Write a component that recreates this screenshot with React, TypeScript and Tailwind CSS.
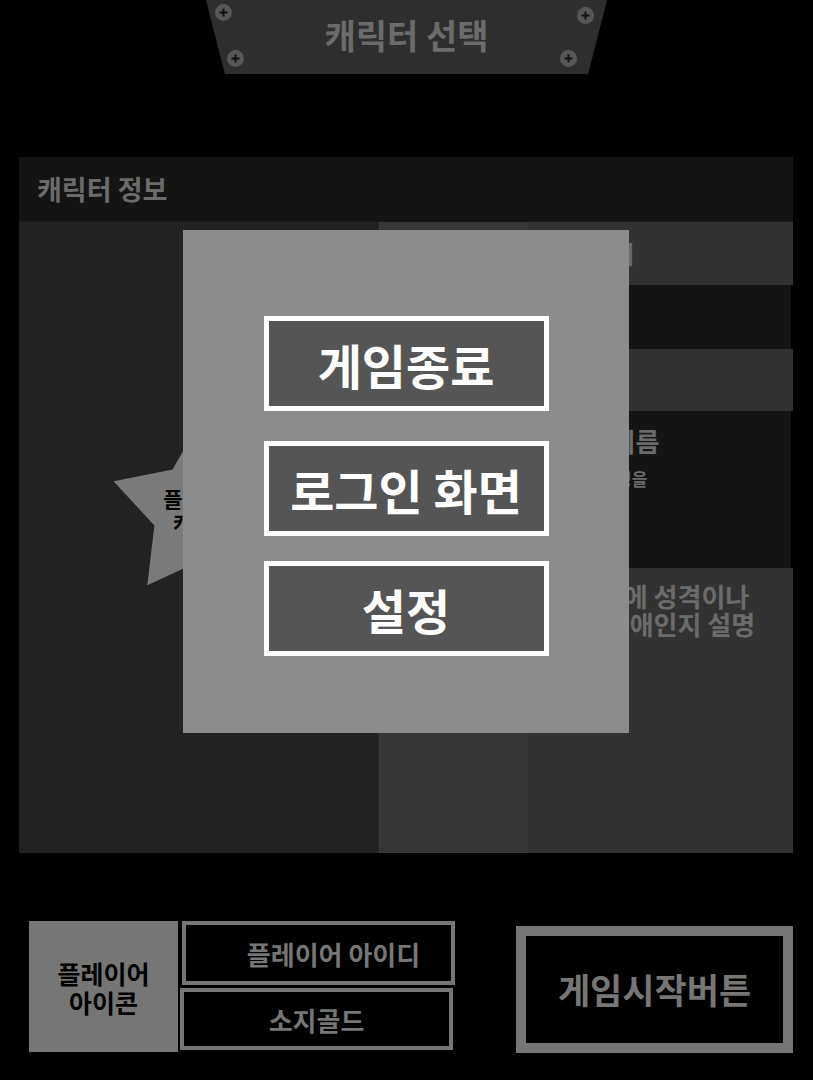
const font = "font-['Noto_Sans_CJK_KR','Noto_Sans',sans-serif]"

const Screw = ({ className }: { className: string }) => (
  <svg className={`absolute ${className}`} width="17" height="17" viewBox="0 0 17 17">
    <circle cx="8.5" cy="8.5" r="8.5" fill="#575757" />
    <rect x="4.5" y="7.5" width="8" height="2" fill="#111" />
    <rect x="7.5" y="4.5" width="2" height="8" fill="#111" />
  </svg>
)

const Star = () => {
  // 5-point star, center (93,93), outer 93, inner 50
  const pts: string[] = []
  for (let i = 0; i < 10; i++) {
    const r = i % 2 === 0 ? 93 : 50
    const a = (-90 + i * 36) * (Math.PI / 180)
    pts.push(`${(93 + r * Math.cos(a)).toFixed(1)},${(93 + r * Math.sin(a)).toFixed(1)}`)
  }
  return (
    <div className="relative w-[186px] h-[186px]">
      <svg width="186" height="186" viewBox="0 0 186 186">
        <polygon points={pts.join(' ')} fill="#7a7a7a" />
      </svg>
      <div className="absolute inset-0 flex flex-col items-center justify-center text-[21px] leading-[24px] font-bold text-black">
        <span>플레이어</span>
        <span>캐릭터</span>
      </div>
    </div>
  )
}

const MenuButton = ({ label }: { label: string }) => (
  <button className="w-[285px] h-[95px] border-[5px] border-white bg-[#555555] text-white text-[48px] font-bold flex items-center justify-center">
    {label}
  </button>
)

export default function App() {
  return (
    <div className={`relative min-h-[1080px] w-full bg-black flex flex-col ${font}`}>
      {/* title banner */}
      <div className="relative mx-auto w-[401px] h-[74px] bg-[#2e2e2e] [clip-path:polygon(0_0,100%_0,95.3%_100%,4.7%_100%)] flex items-center justify-center">
        <span className="text-[34px] font-bold text-[#6b6b6b] -mt-[5px]">캐릭터 선택</span>
        <Screw className="left-[9px] top-[4px]" />
        <Screw className="left-[371px] top-[7px]" />
        <Screw className="left-[21px] top-[50px]" />
        <Screw className="left-[354px] top-[50px]" />
      </div>

      {/* character info panel */}
      <div className="mt-[83px] ml-[19px] w-[774px] flex flex-col">
        <div className="h-[64px] bg-[#141414] flex items-center pl-[18px]">
          <span className="text-[27px] font-bold text-[#6b6b6b]">캐릭터 정보</span>
        </div>
        <div className="h-[632px] flex border-t border-[#1c1c1c]">
          <div className="w-[360px] bg-[#222222] pl-[90px] pt-[195px]">
            <Star />
          </div>
          <div className="w-[149px] bg-[#363636] border-l border-[#3c3c3c]"></div>
          <div className="flex-1 flex flex-col text-[#6b6b6b] font-bold">
            <div className="h-[63px] bg-[#323232] pl-[9px] flex items-center text-[25px]">레벨 표시</div>
            <div className="h-[64px] bg-[#141414] mr-[2px]"></div>
            <div className="h-[62px] bg-[#323232]"></div>
            <div className="h-[157px] bg-[#141414] mr-[2px] pl-[6px] pt-[14px] flex flex-col">
              <span className="text-[26px] leading-[32px]">캐릭터 이름</span>
              <span className="mt-[10px] text-[17px] leading-[24px]">캐릭터의 특징을</span>
            </div>
            <div className="flex-1 bg-[#323232] pl-[24px] pt-[14px] text-[26px] leading-[28px] flex flex-col">
              <span>캐릭터에 성격이나</span>
              <span>뭐하는 애인지 설명</span>
            </div>
          </div>
        </div>
      </div>

      {/* bottom bar */}
      <div className="mt-[68px] flex items-start">
        <div className="ml-[29px] flex">
          <div className="w-[149px] h-[131px] bg-[#767676] flex flex-col items-center justify-center text-[25px] leading-[29px] font-bold text-black pt-[2px]">
            <span>플레이어</span>
            <span>아이콘</span>
          </div>
          <div className="flex flex-col">
            <div className="ml-[4px] w-[273px] h-[64px] border-[4px] border-[#767676] bg-black flex items-center justify-center pl-[30px] text-[26px] font-bold text-[#767676]">
              플레이어 아이디
            </div>
            <div className="ml-[2px] mt-[3px] w-[273px] h-[62px] border-[4px] border-[#767676] bg-black flex items-center justify-center text-[26px] font-bold text-[#767676]">
              소지골드
            </div>
          </div>
        </div>
        <div className="ml-auto mr-[20px] mt-[5px] w-[277px] h-[127px] border-[10px] border-[#767676] bg-black flex items-center justify-center text-[35px] font-bold text-[#767676]">
          게임시작버튼
        </div>
      </div>

      {/* pause menu overlay */}
      <div className="absolute left-[183px] top-[230px] w-[446px] h-[503px] bg-[#8c8c8c] flex flex-col items-center pt-[86px]">
        <MenuButton label="게임종료" />
        <div className="mt-[30px]">
          <MenuButton label="로그인 화면" />
        </div>
        <div className="mt-[25px]">
          <MenuButton label="설정" />
        </div>
      </div>
    </div>
  )
}
